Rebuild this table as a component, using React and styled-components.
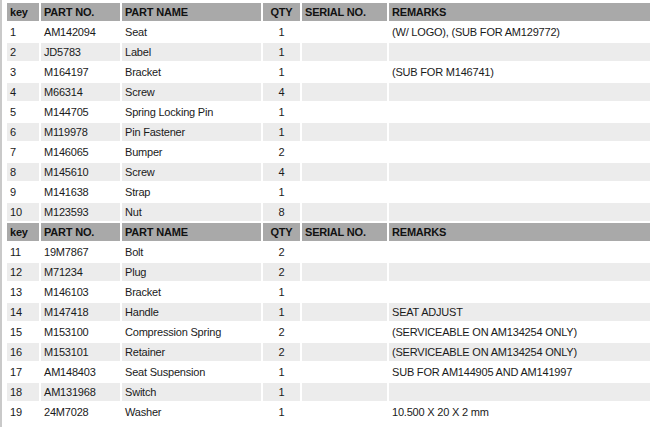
import React from "react";
import styled, { createGlobalStyle } from "styled-components";

const GlobalStyle = createGlobalStyle`
  html, body {
    margin: 0;
    padding: 0;
    background: #ffffff;
  }
  body {
    border-left: 2px solid #c9c9c9;
    min-height: 427px;
    box-sizing: border-box;
  }
`;

const PartsTable = styled.table`
  margin: 1px 0 0 3px;
  border-collapse: separate;
  border-spacing: 2px;
  table-layout: fixed;
  width: 647px;
  font-family: "Liberation Sans", Arial, sans-serif;
  font-size: 11px;
  letter-spacing: -0.2px;
  color: #1a1a1a;
`;

const HeadCell = styled.td`
  height: 18px;
  padding: 0 3px;
  background: #a9a9a9;
  font-weight: bold;
  color: #111;
  text-align: ${({ $center }) => ($center ? "center" : "left")};
  white-space: nowrap;
`;

const Cell = styled.td`
  height: 18px;
  padding: 0 3px;
  background: ${({ $shade }) => ($shade ? "#ececec" : "#ffffff")};
  text-align: ${({ $center }) => ($center ? "center" : "left")};
  white-space: nowrap;
  overflow: hidden;
`;

const columns = [
  { label: "key", width: 32 },
  { label: "PART NO.", width: 79 },
  { label: "PART NAME", width: 139 },
  { label: "QTY", width: 37, center: true },
  { label: "SERIAL NO.", width: 85 },
  { label: "REMARKS", width: 261 },
];

const groups = [
  [
    ["1", "AM142094", "Seat", "1", "", "(W/ LOGO), (SUB FOR AM129772)"],
    ["2", "JD5783", "Label", "1", "", ""],
    ["3", "M164197", "Bracket", "1", "", "(SUB FOR M146741)"],
    ["4", "M66314", "Screw", "4", "", ""],
    ["5", "M144705", "Spring Locking Pin", "1", "", ""],
    ["6", "M119978", "Pin Fastener", "1", "", ""],
    ["7", "M146065", "Bumper", "2", "", ""],
    ["8", "M145610", "Screw", "4", "", ""],
    ["9", "M141638", "Strap", "1", "", ""],
    ["10", "M123593", "Nut", "8", "", ""],
  ],
  [
    ["11", "19M7867", "Bolt", "2", "", ""],
    ["12", "M71234", "Plug", "2", "", ""],
    ["13", "M146103", "Bracket", "1", "", ""],
    ["14", "M147418", "Handle", "1", "", "SEAT ADJUST"],
    ["15", "M153100", "Compression Spring", "2", "", "(SERVICEABLE ON AM134254 ONLY)"],
    ["16", "M153101", "Retainer", "2", "", "(SERVICEABLE ON AM134254 ONLY)"],
    ["17", "AM148403", "Seat Suspension", "1", "", "SUB FOR AM144905 AND AM141997"],
    ["18", "AM131968", "Switch", "1", "", ""],
    ["19", "24M7028", "Washer", "1", "", "10.500 X 20 X 2 mm"],
  ],
];

function HeaderRow() {
  return (
    <tr>
      {columns.map((col) => (
        <HeadCell key={col.label} $center={col.center}>
          {col.label}
        </HeadCell>
      ))}
    </tr>
  );
}

export default function App() {
  return (
    <>
      <GlobalStyle />
      <PartsTable>
        <colgroup>
          {columns.map((col) => (
            <col key={col.label} style={{ width: col.width }} />
          ))}
        </colgroup>
        <tbody>
          {groups.map((rows, gi) => (
            <React.Fragment key={gi}>
              <HeaderRow />
              {rows.map((row, ri) => (
                <tr key={row[0]}>
                  {row.map((value, ci) => (
                    <Cell key={ci} $shade={ri % 2 === 1} $center={columns[ci].center}>
                      {value}
                    </Cell>
                  ))}
                </tr>
              ))}
            </React.Fragment>
          ))}
        </tbody>
      </PartsTable>
    </>
  );
}
